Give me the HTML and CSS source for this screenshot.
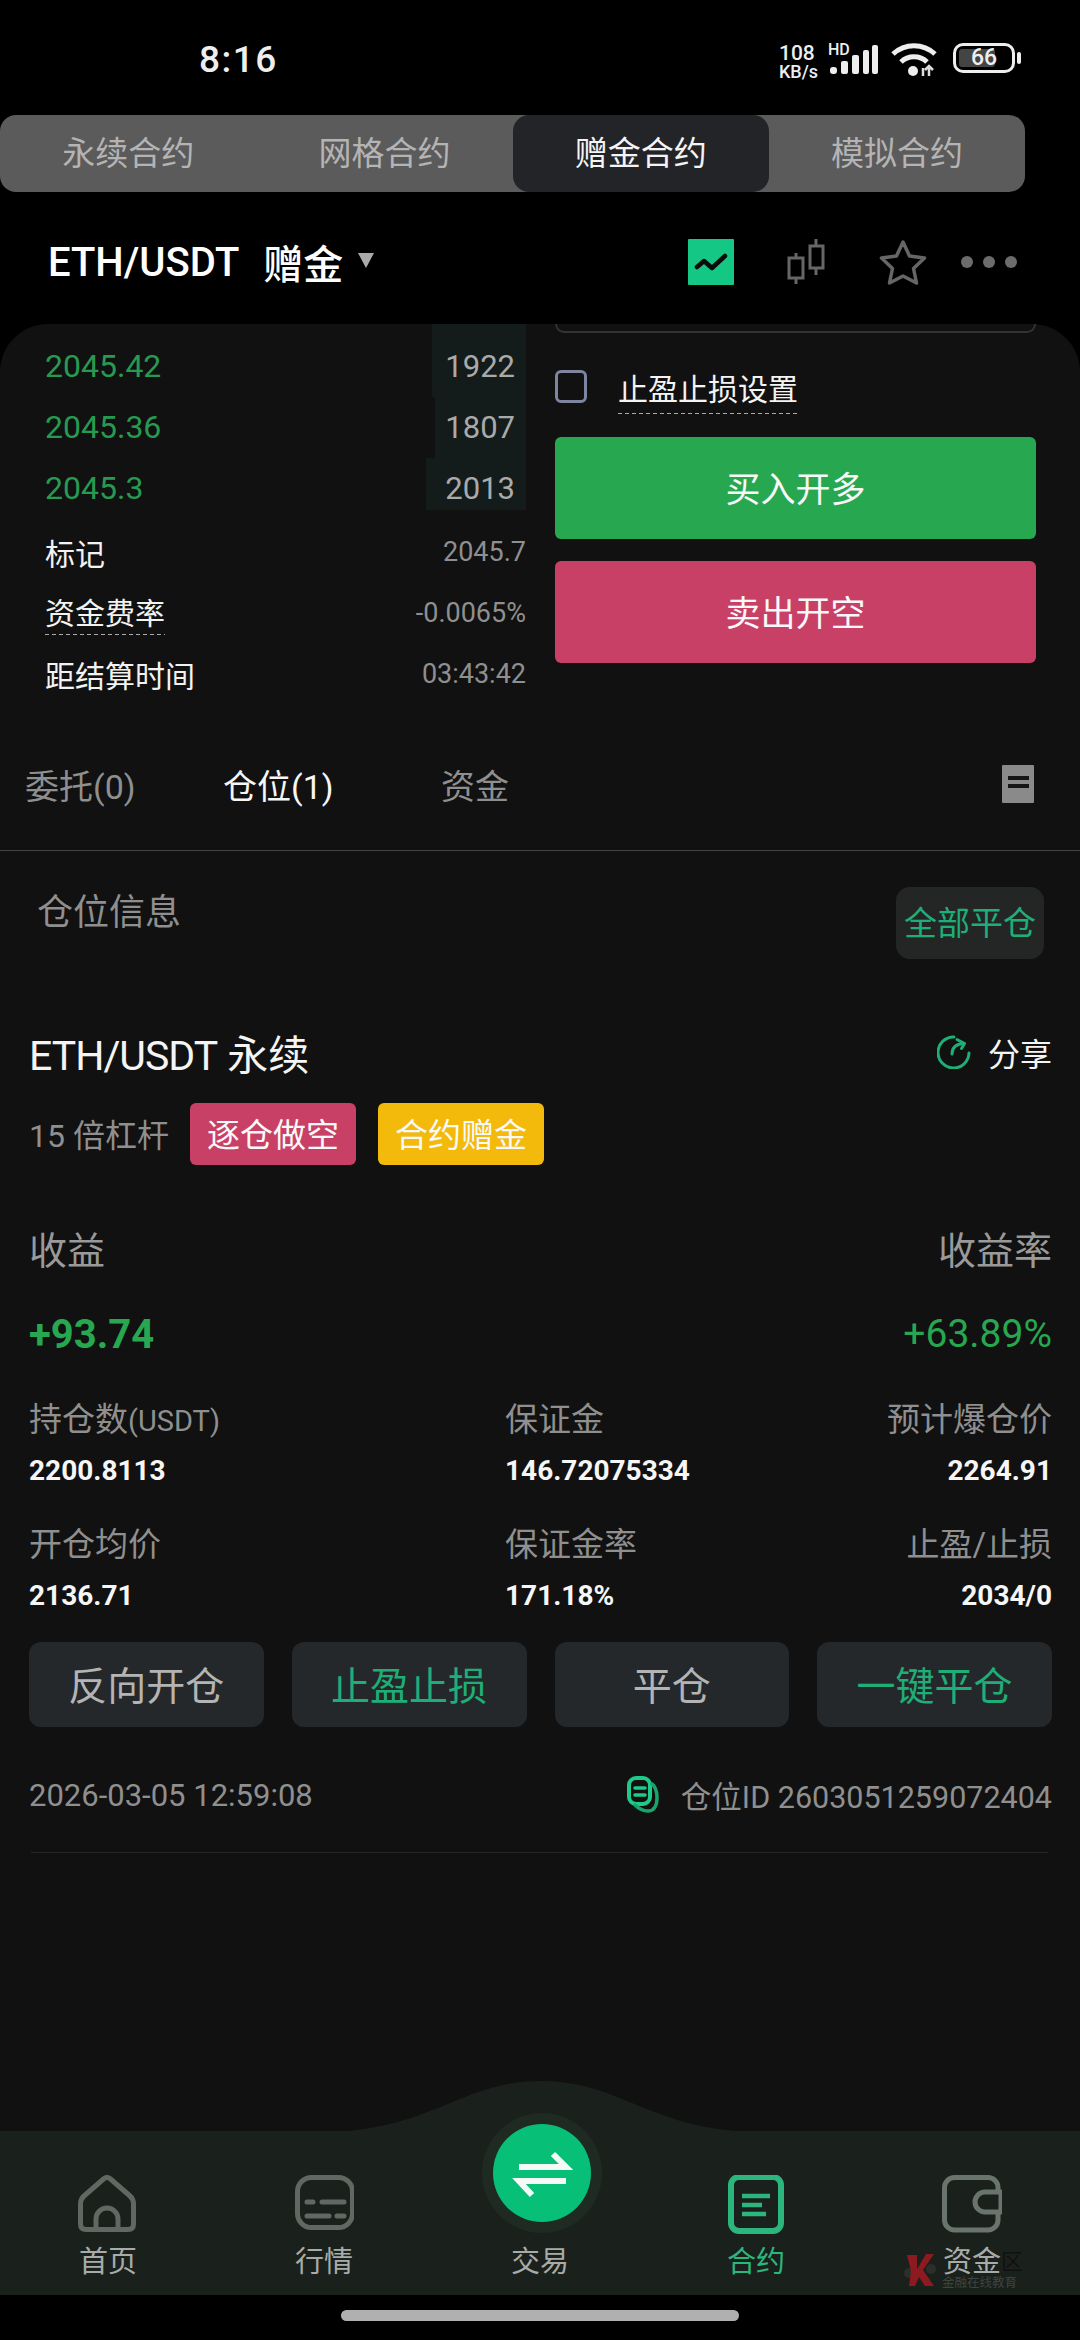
FILE: index.html
```html
<!DOCTYPE html>
<html lang="zh-CN">
<head>
    <meta charset="UTF-8">
    <meta name="viewport" content="width=device-width, initial-scale=1.0">
    <title>赠金合约</title>
    <link rel="stylesheet" href="styles.css">
</head>
<body>
<div class="screen">

    <div class="status-bar">
        <span class="clock">8:16</span>
        <div class="status-icons">
            <div class="speed"><span>108</span><span>KB/s</span></div>
            <div class="signal">
                <span class="hd">HD</span>
                <svg width="48" height="30" viewBox="0 0 48 30"><g fill="#eee"><rect x="0" y="22" width="7" height="7" rx="3"/><rect x="11" y="16" width="7" height="13" rx="2"/><rect x="22" y="10" width="7" height="19" rx="2"/><rect x="33" y="5" width="6" height="24" rx="2"/><rect x="42" y="0" width="6" height="29" rx="2"/></g></svg>
            </div>
            <svg class="wifi" width="46" height="34" viewBox="0 0 46 34"><g fill="none" stroke="#eee" stroke-width="5"><path d="M2 11C14 0 32 0 44 11"/><path d="M10 19C17 12 29 12 36 19"/></g><circle cx="22" cy="28" r="5" fill="#eee"/><path d="M32 33V25M38 33V23M34 27l4-4 4 4" fill="none" stroke="#ddd" stroke-width="2.5"/></svg>
            <div class="battery"><span class="battery-level"></span><span class="battery-num">66</span></div>
            <span class="battery-nub"></span>
        </div>
    </div>

    <div class="mode-tabs">
        <div class="mode-tab">永续合约</div>
        <div class="mode-tab">网格合约</div>
        <div class="mode-tab active">赠金合约</div>
        <div class="mode-tab">模拟合约</div>
    </div>

    <div class="pair-bar">
        <div class="pair-name">
            <span class="pair-symbol">ETH/USDT</span>
            <span class="pair-type">赠金</span>
            <span class="caret"></span>
        </div>
        <div class="pair-actions">
            <svg width="46" height="46" viewBox="0 0 46 46"><rect width="46" height="46" rx="1" fill="#14c784"/><path d="M9 28l7-6 8 7 13-12" fill="none" stroke="#0b0b0b" stroke-width="4.5" stroke-linecap="round" stroke-linejoin="round"/></svg>
            <svg class="candles" width="38" height="48" viewBox="0 0 38 48"><g fill="none" stroke="#666" stroke-width="3"><rect x="2" y="20" width="14" height="20"/><path d="M9 15v5M9 40v6"/><rect x="23" y="8" width="13" height="22"/><path d="M29 1v7M29 30v7"/></g></svg>
            <svg class="star" width="48" height="46" viewBox="0 0 48 46"><path d="M24 3l6.500 14 15 2-11 10.500 3 14.500L24 37 10.500 44l3-14.500L2.500 19l15-2z" fill="none" stroke="#666" stroke-width="3.500" stroke-linejoin="round"/></svg>
            <div class="dots"><span></span><span></span><span></span></div>
        </div>
    </div>

    <div class="panel">
        <div class="trade">
            <div class="trade-left">
                <div class="book-row first"><span class="depth" style="width:94px"></span><span class="book-price">2045.42</span><span class="book-qty">1922</span></div>
                <div class="book-row"><span class="depth" style="width:91px"></span><span class="book-price">2045.36</span><span class="book-qty">1807</span></div>
                <div class="book-row last"><span class="depth" style="width:100px"></span><span class="book-price">2045.3</span><span class="book-qty">2013</span></div>
                <div class="meta-row top"><span>标记</span><span class="meta-val">2045.7</span></div>
                <div class="meta-row"><span class="dashed">资金费率</span><span class="meta-val">-0.0065%</span></div>
                <div class="meta-row"><span>距结算时间</span><span class="meta-val">03:43:42</span></div>
            </div>
            <div class="trade-right">
                <div class="input-stub"></div>
                <div class="tp-row">
                    <span class="checkbox"></span>
                    <span class="tp-label">止盈止损设置</span>
                </div>
                <div class="big-btn buy">买入开多</div>
                <div class="big-btn sell">卖出开空</div>
            </div>
        </div>

        <div class="order-tabs">
            <span>委托(0)</span>
            <span class="active">仓位(1)</span>
            <span>资金</span>
            <svg width="32" height="38" viewBox="0 0 32 38"><rect width="32" height="38" rx="1" fill="#8a8a8a"/><path d="M6 13h21M6 21h21" stroke="#161616" stroke-width="4"/></svg>
        </div>

        <div class="position">
            <div class="info-head">
                <span class="info-title">仓位信息</span>
                <span class="close-all">全部平仓</span>
            </div>

            <div class="pos-title">
                <span class="pos-name"><span class="pos-symbol">ETH/USDT</span> 永续</span>
                <div class="share">
                    <svg width="34" height="34" viewBox="0 0 34 34"><g fill="none" stroke="#1fae78" stroke-width="3" stroke-linecap="round" stroke-linejoin="round"><path d="M17 2A15.500 15.500 0 1 0 32 18"/><path d="M15 19C15 13 19 9 27 8.500"/><path d="M20 4.500l7.500 4-3 5"/></g></svg>
                    <span>分享</span>
                </div>
            </div>

            <div class="pos-tags">
                <span class="leverage">15 倍杠杆</span>
                <span class="tag red">逐仓做空</span>
                <span class="tag yellow">合约赠金</span>
            </div>

            <div class="split-row pnl-labels"><span>收益</span><span>收益率</span></div>
            <div class="split-row pnl-values"><span class="pnl-main">+93.74</span><span class="pnl-rate">+63.89%</span></div>

            <div class="stats">
                <div class="stat"><div class="stat-label">持仓数<span class="unit">(USDT)</span></div><div class="stat-value">2200.8113</div></div>
                <div class="stat"><div class="stat-label">保证金</div><div class="stat-value">146.72075334</div></div>
                <div class="stat end"><div class="stat-label">预计爆仓价</div><div class="stat-value">2264.91</div></div>
                <div class="stat"><div class="stat-label">开仓均价</div><div class="stat-value">2136.71</div></div>
                <div class="stat"><div class="stat-label">保证金率</div><div class="stat-value">171.18%</div></div>
                <div class="stat end"><div class="stat-label">止盈/止损</div><div class="stat-value">2034/0</div></div>
            </div>

            <div class="pos-actions">
                <div class="pos-btn">反向开仓</div>
                <div class="pos-btn green">止盈止损</div>
                <div class="pos-btn">平仓</div>
                <div class="pos-btn green">一键平仓</div>
            </div>

            <div class="pos-foot">
                <span>2026-03-05 12:59:08</span>
                <div class="pos-id">
                    <svg width="32" height="38" viewBox="0 0 32 38"><g fill="none" stroke-linejoin="round" stroke-linecap="round"><rect x="2" y="2" width="21" height="26" rx="7" stroke="#1fc98a" stroke-width="4"/><path d="M8 12h10M8 19h10" stroke="#1fc98a" stroke-width="3.500"/><path d="M25 8c4 3 5 7 5 14 0 9-4 13-9 13-5 0-9-2-13-6" stroke="#17a56e" stroke-width="3.500"/></g></svg>
                    <span>仓位ID 2603051259072404</span>
                </div>
            </div>
            <div class="pos-line"></div>
        </div>

        <div class="nav">
            <svg class="nav-bump" width="1080" height="52" viewBox="0 0 1080 52"><path d="M320 52C430 52 460 1 541 1S652 52 762 52Z" fill="#1a211c"/></svg>
            <div class="nav-item">
                <svg class="nav-icon" width="60" height="60" viewBox="0 0 60 60"><g fill="none" stroke="#5f6962" stroke-width="5" stroke-linejoin="round"><path d="M25.500 4Q29 1 32.500 4L52 21Q55.500 24 55.500 29V49Q55.500 54.500 50 54.500H8Q2.500 54.500 2.500 49V29Q2.500 24 6 21Z"/><path d="M18 54.500V44a11 11 0 0 1 22 0V54.500"/></g></svg>
                <span>首页</span>
            </div>
            <div class="nav-item">
                <svg class="nav-icon" width="60" height="60" viewBox="0 0 60 60"><rect x="3.500" y="2.500" width="55" height="50" rx="14" fill="none" stroke="#5f6962" stroke-width="5"/><path d="M13 27h6M28 27h22M13 41h22M43 41h7" stroke="#5f6962" stroke-width="5" stroke-linecap="round" fill="none"/></svg>
                <span>行情</span>
            </div>
            <div class="nav-item center">
                <svg width="120" height="120" viewBox="0 0 120 120"><circle cx="60" cy="60" r="60" fill="#1f2a22"/><circle cx="60" cy="60" r="49" fill="#08bf78"/><path d="M37 54H84L71 41M84 68H37L50 82" fill="none" stroke="#f4fbf7" stroke-width="6"/></svg>
                <span>交易</span>
            </div>
            <div class="nav-item on">
                <svg class="nav-icon" width="60" height="60" viewBox="0 0 60 60"><rect x="5" y="2" width="50" height="54" rx="8" fill="none" stroke="#2cb67d" stroke-width="6"/><path d="M16 21h28M16 30h20M16 39h24" stroke="#2cb67d" stroke-width="4.500"/></svg>
                <span>合约</span>
            </div>
            <div class="nav-item">
                <svg class="nav-icon" width="60" height="60" viewBox="0 0 60 60"><g fill="none" stroke="#69746c" stroke-width="5" stroke-linejoin="round"><path d="M56 17V12.500a10 10 0 0 0-10-10H12.500a10 10 0 0 0-10 10V45a10 10 0 0 0 10 10H46a10 10 0 0 0 10-10V37"/><path d="M59 17H43a10 10 0 0 0 0 20H59Z"/></g></svg>
                <span>资金</span>
            </div>
            <div class="watermark">
                <svg width="34" height="36" viewBox="0 0 34 36"><circle cx="6" cy="20" r="5" fill="#2b2f2c"/><circle cx="28" cy="16" r="5" fill="#2b2f2c"/><path d="M4 2h10v14l2-3L23 1h8L20 17l11 16h-9l-6-9-4 9H6l2-15Z" fill="#8c1a20"/></svg>
                <span class="wm-text">金融在线教育</span>
                <span class="wm-mark">区</span>
            </div>
        </div>
    </div>

    <div class="home-area"><div class="home-bar"></div></div>
</div>
</body>
</html>
```

FILE: styles.css
```css
* {
    box-sizing: border-box;
}

body {
    margin: 0;
    background-color: #000;
    font-family: Roboto, "Noto Sans CJK SC", sans-serif;
    color: #fff;
}

.screen {
    width: 1080px;
    height: 2340px;
    display: flex;
    flex-direction: column;
    overflow: hidden;
}

/* status bar */
.status-bar {
    height: 115px;
    flex: none;
    display: flex;
    justify-content: space-between;
    align-items: flex-start;
    padding: 39px 59px 0 199px;
}

.clock {
    font-size: 37px;
    line-height: 42px;
    font-weight: 500;
    letter-spacing: 1.5px;
    color: #eee;
}

.status-icons {
    display: flex;
    align-items: flex-start;
    margin-top: 4px;
}

.speed {
    width: 48px;
    display: flex;
    flex-direction: column;
    font-size: 18px;
    line-height: 17px;
    font-weight: 500;
    color: #eee;
}

.speed span:first-child {
    font-size: 21px;
    line-height: 20px;
}

.signal {
    position: relative;
    width: 48px;
    margin-left: 3px;
    padding-top: 2px;
}

.hd {
    position: absolute;
    left: -2px;
    top: 0;
    font-size: 16px;
    line-height: 14px;
    font-weight: 500;
    color: #eee;
}

.wifi {
    margin-left: 13px;
}

.battery {
    position: relative;
    width: 62px;
    height: 30px;
    margin-left: 16px;
    border: 3px solid #eee;
    border-radius: 10px;
    overflow: hidden;
    text-align: center;
}

.battery-level {
    position: absolute;
    left: 3px;
    top: 3px;
    bottom: 3px;
    width: 36px;
    background-color: #444;
    border-radius: 3px;
}

.battery-num {
    position: relative;
    font-size: 23px;
    line-height: 24px;
    font-weight: 500;
    color: #eee;
    display: block;
}

.battery-nub {
    width: 4px;
    height: 12px;
    margin: 9px 0 0 2px;
    background-color: #eee;
    border-radius: 2px;
}

/* contract type tabs */
.mode-tabs {
    width: 1025px;
    height: 77px;
    flex: none;
    display: grid;
    grid-template-columns: repeat(4, 1fr);
    background-color: #5b5b5b;
    border-radius: 16px;
}

.mode-tab {
    display: flex;
    justify-content: center;
    align-items: center;
    padding-bottom: 5px;
    font-size: 33px;
    color: #b4b4b4;
    border-radius: 16px;
}

.mode-tab.active {
    background-color: #232427;
    color: #f4f4f4;
}

/* pair header */
.pair-bar {
    height: 132px;
    flex: none;
    display: flex;
    justify-content: space-between;
    align-items: center;
    padding: 8px 63px 0 48px;
}

.pair-name {
    display: flex;
    align-items: center;
}

.pair-symbol {
    font-size: 40px;
    font-weight: 500;
}

.pair-type {
    margin-left: 24px;
    font-size: 40px;
    font-weight: 500;
}

.caret {
    width: 0;
    height: 0;
    margin-left: 15px;
    border-left: 8px solid transparent;
    border-right: 8px solid transparent;
    border-top: 15px solid #aaa;
    margin-top: -4px;
}

.pair-actions {
    display: flex;
    align-items: center;
}

.candles {
    margin-left: 53px;
}

.star {
    margin-left: 54px;
}

.dots {
    display: flex;
    gap: 10px;
    margin-left: 34px;
}

.dots span {
    width: 12px;
    height: 12px;
    border-radius: 50%;
    background-color: #6c6c6c;
}

/* main panel */
.panel {
    flex: 1;
    display: flex;
    flex-direction: column;
    background-color: #111;
    border-radius: 48px 48px 0 0;
}

.trade {
    height: 382px;
    flex: none;
    display: flex;
    gap: 29px;
    padding: 0 44px 0 45px;
}

.trade-left,
.trade-right {
    width: 481px;
}

.book-row {
    position: relative;
    height: 61px;
    display: flex;
    justify-content: space-between;
    font-size: 31px;
    line-height: 61px;
}

.book-row.first {
    height: 73px;
    padding-top: 12px;
}

.book-row.last {
    height: 52px;
}

.depth {
    position: absolute;
    right: 0;
    top: 0;
    bottom: 0;
    background-color: #131c1b;
}

.book-price {
    position: relative;
    font-size: 32px;
    color: #279a52;
}

.book-qty {
    position: relative;
    padding-right: 11px;
    color: #aaa;
}

.meta-row {
    height: 61px;
    padding-bottom: 2px;
    display: flex;
    justify-content: space-between;
    align-items: center;
    font-size: 30px;
    color: #f2f2f2;
}

.meta-row.top {
    margin-top: 12px;
}

.meta-val {
    font-size: 27px;
    color: #8f8f8f;
}

.dashed {
    margin-top: 5px;
    line-height: 38px;
    background-image: linear-gradient(to right, #aaa 55%, transparent 55%);
    background-size: 7px 1.5px;
    background-repeat: repeat-x;
    background-position: 0 100%;
    padding-bottom: 2px;
}

.input-stub {
    height: 9px;
    border: 2px solid #333;
    border-top: none;
    border-radius: 0 0 14px 14px;
}

.tp-row {
    height: 104px;
    display: flex;
    align-items: center;
    padding-top: 1px;
}

.checkbox {
    width: 32px;
    height: 33px;
    border: 3px solid #7f84a0;
    border-radius: 6px;
    margin-top: 2px;
}

.tp-label {
    margin-left: 31px;
    font-size: 30px;
    line-height: 41px;
    color: #f4f4f4;
    background-image: linear-gradient(to right, #aaa 55%, transparent 55%);
    background-size: 7px 1.5px;
    background-repeat: repeat-x;
    background-position: 0 100%;
    padding: 2px 0 4px;
    margin-top: 10px;
}

.big-btn {
    height: 102px;
    display: flex;
    justify-content: center;
    align-items: center;
    padding-bottom: 4px;
    border-radius: 6px;
    font-size: 35px;
    color: #f8f8f8;
}

.big-btn.buy {
    background-color: #27a850;
}

.big-btn.sell {
    margin-top: 22px;
    background-color: #c94067;
}

/* order tabs */
.order-tabs {
    height: 145px;
    flex: none;
    display: grid;
    grid-template-columns: 198px 218px 1fr auto;
    align-items: center;
    padding: 12px 46px 0 25px;
    border-bottom: 1px solid #444;
    font-size: 34px;
    color: #8f8f8f;
}

.order-tabs .active {
    color: #f6f6f6;
}

/* position card */
.position {
    flex: none;
    padding: 0 28px 0 29px;
}

.info-head {
    display: flex;
    justify-content: space-between;
    margin-top: 36px;
    height: 72px;
    padding: 0 8px 0 8px;
}

.info-title {
    font-size: 36px;
    line-height: 52px;
    color: #8f8f8f;
}

.close-all {
    width: 148px;
    display: flex;
    justify-content: center;
    align-items: center;
    padding-bottom: 4px;
    background-color: #242626;
    border-radius: 14px;
    font-size: 33px;
    color: #1fae78;
}

.pos-title {
    height: 56px;
    margin-top: 67px;
    padding-bottom: 4px;
    display: flex;
    justify-content: space-between;
    align-items: center;
}

.pos-name {
    font-size: 41px;
    color: #f4f4f4;
}

.pos-symbol {
    letter-spacing: -1px;
}

.share {
    display: flex;
    align-items: center;
    gap: 17px;
    font-size: 32px;
    color: #f4f4f4;
}

.pos-tags {
    height: 62px;
    margin-top: 21px;
    display: flex;
    align-items: center;
}

.leverage {
    width: 161px;
    padding-bottom: 3px;
    font-size: 32px;
    color: #8f8f8f;
}

.tag {
    width: 166px;
    height: 62px;
    margin-right: 22px;
    display: flex;
    justify-content: center;
    align-items: center;
    padding-bottom: 3px;
    border-radius: 6px;
    font-size: 33px;
    color: #f8f8f8;
}

.tag.red {
    background-color: #c94067;
}

.tag.yellow {
    background-color: #f3b90b;
}

.split-row {
    display: flex;
    justify-content: space-between;
    align-items: center;
}

.pnl-labels {
    height: 48px;
    margin-top: 60px;
    padding-bottom: 3px;
    font-size: 38px;
    color: #9a9a9a;
}

.pnl-values {
    height: 48px;
    margin-top: 36px;
    padding-top: 2px;
}

.pnl-main {
    font-size: 40px;
    font-weight: 700;
    color: #27a850;
}

.pnl-rate {
    font-size: 39px;
    color: #27a850;
}

.stats {
    display: grid;
    grid-template-columns: 476px 1fr 1fr;
    row-gap: 31px;
    margin-top: 40px;
}

.stat-label {
    height: 42px;
    font-size: 33px;
    line-height: 46px;
    color: #8f8f8f;
}

.unit {
    font-size: 29px;
}

.stat-value {
    height: 40px;
    margin-top: 12px;
    font-size: 28px;
    line-height: 40px;
    font-weight: 700;
    color: #f6f6f6;
}

.stat.end {
    text-align: right;
}

.pos-actions {
    display: grid;
    grid-template-columns: repeat(4, 1fr);
    gap: 28px;
    margin-top: 26px;
}

.pos-btn {
    height: 85px;
    display: flex;
    justify-content: center;
    align-items: center;
    padding-bottom: 4px;
    background-color: #25282a;
    border-radius: 12px;
    font-size: 39px;
    color: #b4b4b4;
}

.pos-btn.green {
    color: #1fae78;
}

.pos-foot {
    height: 44px;
    margin-top: 46px;
    display: flex;
    justify-content: space-between;
    align-items: center;
    font-size: 31px;
    color: #8f8f8f;
}

.pos-id {
    display: flex;
    align-items: center;
    gap: 22px;
    font-size: 30.5px;
}

.pos-line {
    height: 1px;
    margin: 35px 4px 0 2px;
    background-color: #262626;
}

/* bottom nav */
.nav {
    position: relative;
    height: 164px;
    flex: none;
    margin-top: auto;
    display: grid;
    grid-template-columns: repeat(5, 216px);
    background-color: #1a211c;
}

.nav-bump {
    position: absolute;
    left: 0;
    top: -51px;
}

.nav-item {
    position: relative;
    display: flex;
    flex-direction: column;
    align-items: center;
    font-size: 29px;
    line-height: 40px;
    color: #a8aca9;
}

.nav-icon {
    margin-top: 44px;
    margin-bottom: 7px;
}

.nav-item.center {
    margin-top: -18px;
}

.nav-item.center svg {
    margin-bottom: 9px;
    margin-left: 4px;
}

.nav-item.on {
    color: #2cb67d;
}

/* forum stamp over the corner of the nav */
.watermark {
    position: absolute;
    left: 903px;
    top: 122px;
    width: 120px;
    height: 38px;
}

.wm-text {
    position: absolute;
    left: 39px;
    bottom: 0;
    font-size: 12.5px;
    line-height: 16px;
    color: #3e4440;
}

.wm-mark {
    position: absolute;
    left: 98px;
    top: -4px;
    font-size: 22px;
    line-height: 26px;
    color: #111;
}

/* gesture bar */
.home-area {
    height: 45px;
    flex: none;
    padding-top: 15px;
}

.home-bar {
    width: 398px;
    height: 11px;
    margin: 0 auto;
    background-color: #b0b0b0;
    border-radius: 6px;
}
```
